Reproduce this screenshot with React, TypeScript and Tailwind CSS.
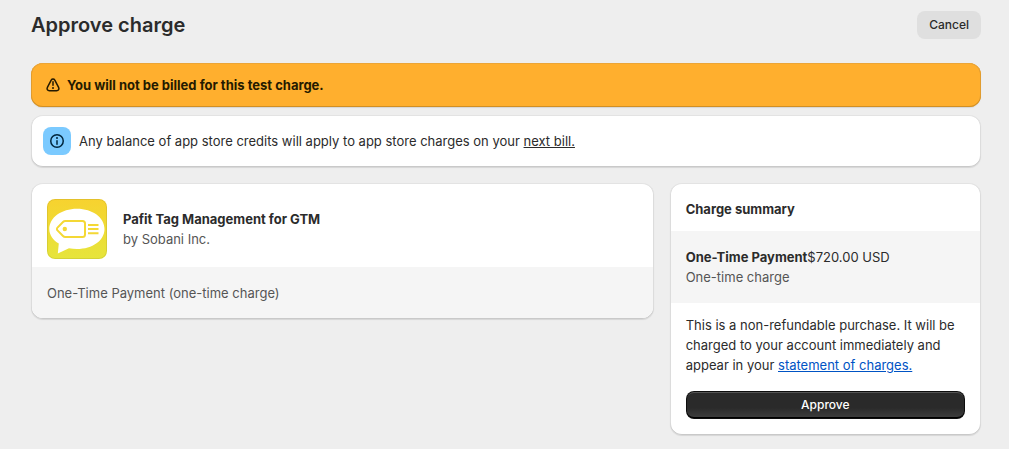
import type { ReactNode } from 'react';

// Types
interface CardProps {
  children: ReactNode;
}

const cardShadow =
  'shadow-[0_1px_1px_rgba(0,0,0,0.1),inset_0_-1px_0_#c9c9c9,inset_0_1px_0_#e3e3e3,inset_1px_0_0_#dcdcdc,inset_-1px_0_0_#dcdcdc]';

// Icons
const AlertIcon = () => (
  <svg viewBox="0 0 20 20" className="size-5 shrink-0" fill="currentColor" aria-hidden="true">
    <path d="M10 6a.75.75 0 0 1 .75.75v3.5a.75.75 0 0 1-1.5 0v-3.5A.75.75 0 0 1 10 6Z" />
    <circle cx="10" cy="13" r="1" />
    <path
      fill="none"
      stroke="currentColor"
      strokeWidth="1.5"
      strokeLinejoin="round"
      d="M8.2 5.1 4.4 12.3c-.9 1.85.05 3.45 2 3.45h7.2c1.95 0 2.9-1.6 2-3.45L11.8 5.1c-.85-1.45-2.75-1.45-3.6 0Z"
    />
  </svg>
);

const InfoIcon = () => (
  <svg viewBox="0 0 20 20" className="size-5" fill="currentColor" aria-hidden="true">
    <circle cx="10" cy="10" r="6.25" fill="none" stroke="currentColor" strokeWidth="1.5" />
    <path d="M10 14a.75.75 0 0 1-.75-.75v-3.5a.75.75 0 0 1 1.5 0v3.5a.75.75 0 0 1-.75.75Z" />
    <circle cx="10" cy="7" r="1" />
  </svg>
);

const AppLogo = () => (
  <svg viewBox="0 0 60 60" className="size-15 shrink-0 rounded-lg" role="img" aria-label="Pafit Tag Management for GTM">
    <defs>
      <linearGradient id="logoFill" x1="0" y1="0" x2="0" y2="1">
        <stop offset="0" stopColor="#f7d22f" />
        <stop offset="1" stopColor="#e6e53b" />
      </linearGradient>
    </defs>
    <rect width="60" height="60" fill="url(#logoFill)" />
    <path
      fill="#fff"
      d="M30 9.7C14.5 9.7 2.3 18.5 2.3 30c0 6 3.7 11 9.5 14.600L10.800 54.500 22 49.200c2.500.5 5.200.8 8 .8 15.500 0 27.500-8.500 27.500-20S45.500 9.700 30 9.700Z"
    />
    <g fill="none" stroke="#f4d835" strokeWidth="2" strokeLinejoin="round">
      <path d="M18.2 22H35.500a2.500 2.500 0 0 1 2.500 2.500v11A2.500 2.500 0 0 1 35.500 38H18.200c-1 0-1.500-.3-2.200-1L10.500 31.400c-.8-.8-.8-2 0-2.800L16 23c.7-.7 1.200-1 2.200-1Z" />
      <path d="M41 26h10.500M41 30h10.500M41 34.200h10.500" />
    </g>
    <circle cx="17.800" cy="30" r="2.200" fill="#f4d835" />
    <rect x=".5" y=".5" width="59" height="59" rx="7.5" fill="none" stroke="#000" strokeOpacity=".08" />
  </svg>
);

// Components
const Card = ({ children }: CardProps) => (
  <section className={`rounded-xl bg-white p-px ${cardShadow}`}>
    <div className="overflow-hidden rounded-[11px]">{children}</div>
  </section>
);

const PageHeader = () => (
  <header className="flex items-center justify-between">
    <h1 className="text-xl leading-6 font-semibold">Approve charge</h1>
    <button type="button" className="h-7 rounded-lg bg-[#dfdfdf] px-3 text-xs font-[550]">
      Cancel
    </button>
  </header>
);

const TestChargeBanner = () => (
  <div
    role="status"
    className="flex items-center gap-1 rounded-xl bg-[#ffaf2e] px-3 py-3 text-[#251a00] shadow-[0_1px_1px_rgba(0,0,0,0.1),inset_0_-1px_0_#d18f25,inset_0_1px_0_#eba537,inset_1px_0_0_#e09c30,inset_-1px_0_0_#e09c30]"
  >
    <AlertIcon />
    <p className="font-[650]">You will not be billed for this test charge.</p>
  </div>
);

const CreditsBanner = () => (
  <div className={`flex items-center gap-2 rounded-xl bg-white p-3 ${cardShadow}`}>
    <span className="flex size-7 shrink-0 items-center justify-center rounded-lg bg-[#7bcaff] text-[#00263d]">
      <InfoIcon />
    </span>
    <p>
      Any balance of app store credits will apply to app store charges on your{' '}
      <a href="#next-bill" className="underline">next bill.</a>
    </p>
  </div>
);

const AppCard = () => (
  <Card>
    <div className="flex items-center gap-4 px-[15px] pt-[15px] pb-2">
      <AppLogo />
      <div>
        <h2 className="font-[650]">Pafit Tag Management for GTM</h2>
        <p className="text-[#555555]">by Sobani Inc.</p>
      </div>
    </div>
    <p className="bg-[#f5f5f5] px-[15px] pt-4 pb-[15px] text-[#555555]">One-Time Payment (one-time charge)</p>
  </Card>
);

const ChargeSummary = () => (
  <Card>
    <h2 className="px-[15px] pt-[15px] pb-3 font-[650]">Charge summary</h2>
    <div className="bg-[#f5f5f5] px-[15px] py-4">
      <p>
        <strong className="font-[650]">One-Time Payment</strong>$720.00 USD
      </p>
      <p className="text-[#555555]">One-time charge</p>
    </div>
    <div className="px-[15px] pt-3 pb-[15px]">
      <p>
        This is a non-refundable purchase. It will be charged to your account immediately and appear in your{' '}
        <a href="#charges" className="text-[#0053c4] underline">statement of charges.</a>
      </p>
      <button
        type="button"
        className="mt-4 h-7 w-full rounded-lg bg-[#2a2a2a] bg-linear-to-b from-[#2a2a2a] from-60% to-[#404040] text-xs font-[550] text-white shadow-[inset_0_0_0_1px_#0d0d0d,inset_0_-2px_0_#000000,inset_0_2px_0_#555555]"
      >
        Approve
      </button>
    </div>
  </Card>
);

const App = () => (
  <div className="min-h-screen bg-[#eeeeee] pt-[11px] pr-7 pb-3 pl-[31px] font-['Inter',sans-serif] text-[13px] leading-5 text-[#2b2b2b]">
    <PageHeader />
    <main className="mt-6 flex flex-col gap-4">
      <div className="flex flex-col gap-2">
        <TestChargeBanner />
        <CreditsBanner />
      </div>
      <div className="grid grid-cols-[2fr_1fr] items-start gap-4">
        <AppCard />
        <ChargeSummary />
      </div>
    </main>
  </div>
);

export default App;
